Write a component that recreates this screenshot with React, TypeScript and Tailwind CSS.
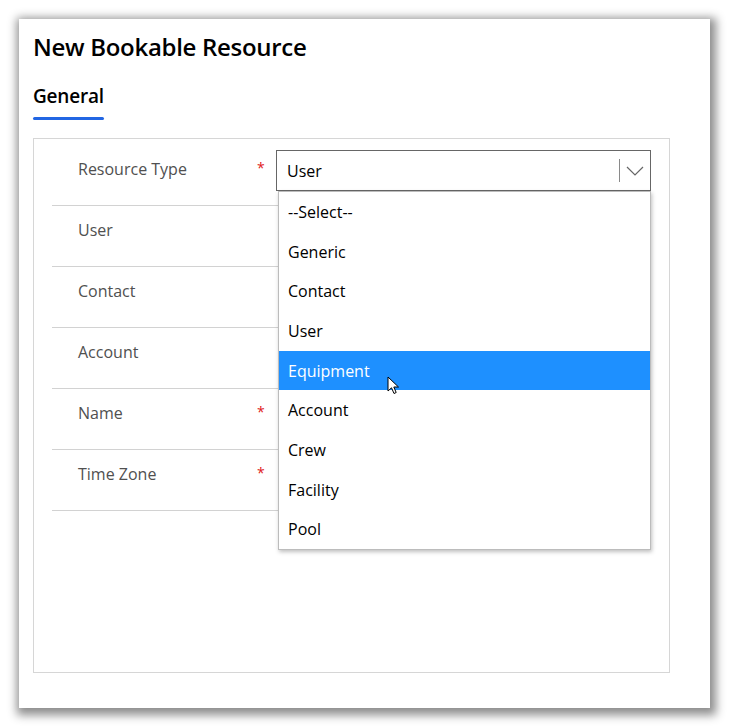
import React from 'react';

const rows = [
  { label: 'Resource Type', required: true },
  { label: 'User', required: false },
  { label: 'Contact', required: false },
  { label: 'Account', required: false },
  { label: 'Name', required: true },
  { label: 'Time Zone', required: true },
];

const options = ['--Select--', 'Generic', 'Contact', 'User', 'Equipment', 'Account', 'Crew', 'Facility', 'Pool'];

function Cursor() {
  return (
    <svg width="13" height="19" viewBox="0 0 13 19" className="absolute left-[108px] top-[25px]">
      <path
        d="M1 1 L1 15 L4.5 11.8 L7 17.5 L9.2 16.5 L6.8 11 L11.5 11 Z"
        fill="#fff"
        stroke="#000"
        strokeWidth="1"
        strokeLinejoin="round"
      />
    </svg>
  );
}

export default function App() {
  return (
    <div className="w-[729px] h-[727px] bg-white p-[19px] font-['Open_Sans',sans-serif]">
      <div className="w-[691px] h-[689px] bg-white shadow-[2px_3px_9px_4px_rgba(0,0,0,0.45)] flex flex-col px-[14px]">
        {/* Header */}
        <h1 className="mt-[13px] text-[24px] leading-[30px] font-semibold text-black tracking-[-0.3px]">
          New Bookable Resource
        </h1>

        {/* Tabs */}
        <div className="mt-[21px] flex">
          <div className="flex flex-col">
            <span className="text-[19px] leading-[26px] font-semibold text-black tracking-[-0.2px]">General</span>
            <span className="mt-[8px] h-[3px] rounded-full bg-[#2266e3]"></span>
          </div>
        </div>

        {/* Section */}
        <div className="mt-[18px] mr-[26px] h-[535px] border border-[#d6d6d6] pt-[5px] px-[18px]">
          {rows.map((row, i) => (
            <div
              key={row.label}
              className={
                i === 0
                  ? 'h-[62px] border-b border-[#d2d2d2] flex'
                  : 'h-[61px] border-b border-[#d2d2d2] flex'
              }
            >
              <div className={i === 0 ? 'w-[225px] pl-[26px] pt-[14px] flex' : 'w-[225px] pl-[26px] pt-[13px] flex'}>
                <span className="w-[179px] text-[16px] leading-[22px] text-[#505050]">{row.label}</span>
                {row.required && <span className="text-[#e02020] text-[14px] leading-[20px]">*</span>}
              </div>
              {i === 0 && (
                <div className="relative pt-[6px]">
                  <div className="w-[375px] h-[41px] border border-[#666] flex items-center pl-[10px] pr-[6px]">
                    <span className="flex-1 text-[16px] text-black">User</span>
                    <span className="w-px h-[23px] bg-[#8a8a8a]"></span>
                    <svg width="18" height="10" viewBox="0 0 18 10" className="ml-[6px]">
                      <path d="M1 1 L9 9 L17 1" fill="none" stroke="#666" strokeWidth="1.2" />
                    </svg>
                  </div>
                  <div className="absolute left-[2px] top-[47px] w-[373px] bg-white border border-[#bcbcbc] shadow-[1px_2px_4px_rgba(0,0,0,0.25)] z-10">
                    {options.map((opt) => (
                      <div
                        key={opt}
                        className={
                          opt === 'Equipment'
                            ? 'relative h-[39.7px] flex items-center pl-[9px] bg-[#1e90ff] text-white text-[16px]'
                            : 'h-[39.7px] flex items-center pl-[9px] text-black text-[16px]'
                        }
                      >
                        {opt}
                        {opt === 'Equipment' && <Cursor />}
                      </div>
                    ))}
                  </div>
                </div>
              )}
            </div>
          ))}
        </div>
      </div>
    </div>
  );
}
